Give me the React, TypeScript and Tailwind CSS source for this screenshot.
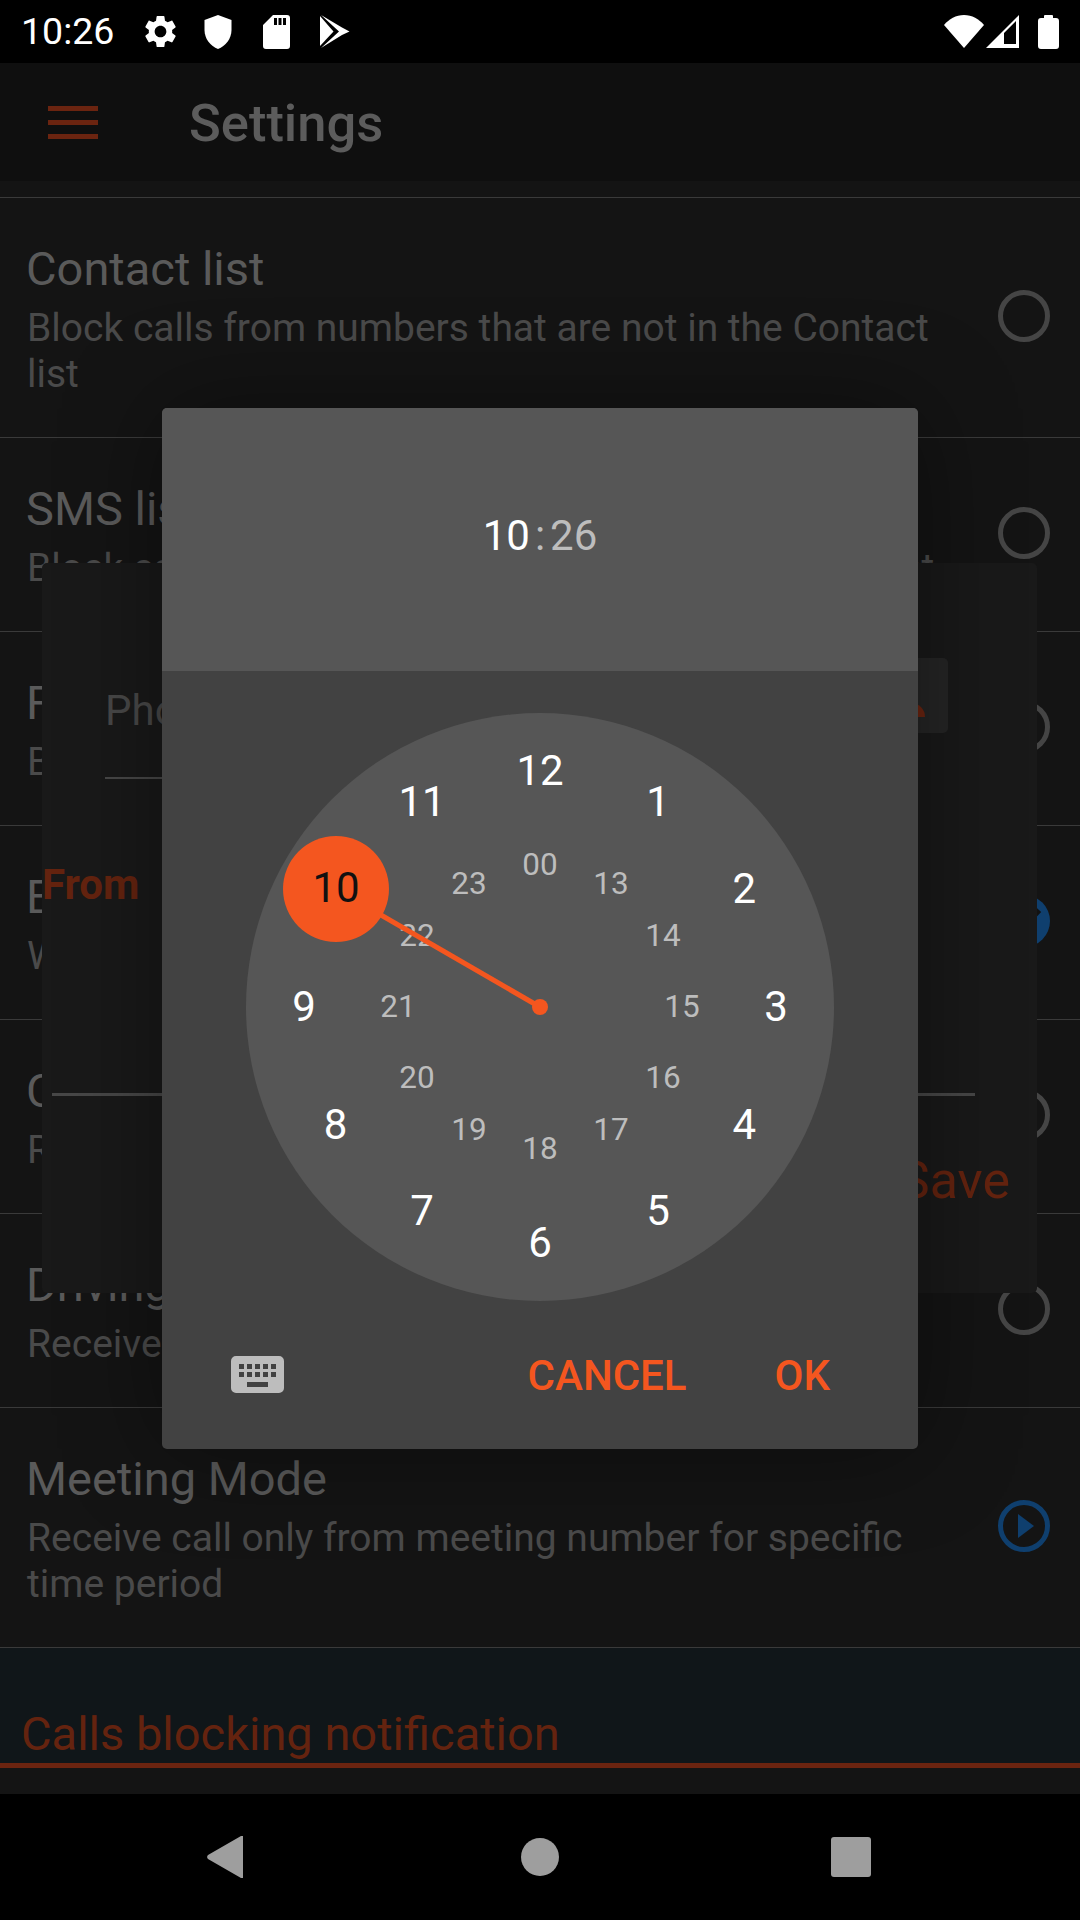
import React from "react";

const outerHours = [12, 1, 2, 3, 4, 5, 6, 7, 8, 9, 10, 11];
const innerHours = ["00", 13, 14, 15, 16, 17, 18, 19, 20, 21, 22, 23];

const rows = [
  { title: "Contact list", sub: ["Block calls from numbers that are not in the Contact", "list"] },
  { title: "SMS list", sub: ["Block calls from numbers that are not in the SMS list"] },
  { title: "Foreign", sub: ["Block foreign numbers"] },
  { title: "Exceptions", sub: ["White list"], state: "checked" },
  { title: "Custom", sub: ["Receive custom"] },
  { title: "Driving Mode", sub: ["Receive call"] },
  { title: "Meeting Mode", sub: ["Receive call only from meeting number for specific", "time period"], state: "play" },
];

const polar = (index: number, radius: number) => {
  const angle = (index * 30 * Math.PI) / 180;
  return { left: 294 + radius * Math.sin(angle), top: 294 - radius * Math.cos(angle) };
};

const StatusBar = () => (
  <div className="flex h-[63px] shrink-0 items-center bg-black pl-[21px] pr-[21px] text-white">
    <span className="w-[120px] text-[37.5px] leading-none">10:26</span>
    <svg className="h-[39px] w-[39px]" viewBox="0 0 24 24" fill="#fff">
      <path d="M19.14 12.94c.04-.3.06-.61.06-.94 0-.32-.02-.64-.07-.94l2.03-1.58c.18-.14.23-.41.12-.61l-1.92-3.32c-.12-.22-.37-.29-.59-.22l-2.39.96c-.5-.38-1.03-.7-1.62-.94l-.36-2.54c-.04-.24-.24-.41-.48-.41h-3.84c-.24 0-.43.17-.47.41l-.36 2.54c-.59.24-1.13.57-1.62.94l-2.39-.96c-.22-.08-.47 0-.59.22L2.74 8.87c-.12.21-.08.47.12.61l2.03 1.58c-.05.3-.09.63-.09.94s.02.64.07.94l-2.03 1.58c-.18.14-.23.41-.12.61l1.92 3.32c.12.22.37.29.59.22l2.39-.96c.5.38 1.03.7 1.62.94l.36 2.54c.05.24.24.41.48.41h3.84c.24 0 .44-.17.47-.41l.36-2.54c.59-.24 1.13-.56 1.62-.94l2.39.96c.22.08.47 0 .59-.22l1.92-3.32c.12-.22.07-.47-.12-.61l-2.01-1.58zM12 15.6c-1.98 0-3.6-1.62-3.6-3.6s1.62-3.6 3.6-3.6 3.6 1.62 3.6 3.6-1.62 3.6-3.6 3.6z" />
    </svg>
    <svg className="ml-[24px] h-[34px] w-[28px]" viewBox="0 0 28 34" fill="#fff">
      <path d="M14 0 L27.5 5 V15 C27.5 24 21.5 31 14 34 C6.5 31 0.5 24 0.5 15 V5 Z" />
    </svg>
    <svg className="ml-[31px] h-[34px] w-[27px]" viewBox="0 0 27 34" fill="#fff">
      <path fillRule="evenodd" d="M10 0 H24 a3 3 0 0 1 3 3 V31 a3 3 0 0 1 -3 3 H3 a3 3 0 0 1 -3 -3 V10 Z M11 3 V10 H14 V3 Z M15.5 3 V10 H18.5 V3 Z M20 3 V10 H23 V3 Z" />
    </svg>
    <svg className="ml-[30px] h-[33px] w-[30px]" viewBox="0 0 30 33" fill="#fff">
      <path d="M0 1 L0 31 L13.5 16.5 Z" />
      <path d="M1 0 L19 16.5 L1 33 L22 20 L29.5 16.5 L22 12.5 Z" />
    </svg>
    <div className="flex-1" />
    <svg className="h-[33px] w-[40px]" viewBox="0 0 40 33" fill="#fff">
      <path d="M0 10 C5 4 12 0 20 0 C28 0 35 4 40 10 L20 33 Z" />
    </svg>
    <svg className="ml-[2px] h-[34px] w-[34px]" viewBox="0 0 34 34" fill="#fff">
      <path fillRule="evenodd" d="M33 0 V33 H0 Z M30 6 L18 18 V29 H30 Z" />
    </svg>
    <svg className="ml-[18px] h-[35px] w-[21px]" viewBox="0 0 21 35" fill="#fff">
      <path d="M6 2 a1 1 0 0 1 1 -1 h7 a1 1 0 0 1 1 1 v2 h3 a3 3 0 0 1 3 3 v25 a3 3 0 0 1 -3 3 h-15 a3 3 0 0 1 -3 -3 v-25 a3 3 0 0 1 3 -3 h3 z" />
    </svg>
  </div>
);

const AppBar = () => (
  <div className="flex h-[118px] shrink-0 items-center bg-[#0f0f0f]">
    <div className="ml-[48px] flex w-[50px] flex-col gap-[9px]">
      <div className="h-[5px] bg-[#6b2410]" />
      <div className="h-[5px] bg-[#6b2410]" />
      <div className="h-[5px] bg-[#6b2410]" />
    </div>
    <span className="ml-[91px] pt-[3px] text-[52.5px] font-medium text-[#5c5c5c]">Settings</span>
  </div>
);

const Radio = ({ state }: { state?: string }) => {
  if (state === "checked") {
    return (
      <svg className="mb-[3px] h-[52px] w-[52px] shrink-0" viewBox="0 0 52 52" fill="none">
        <circle cx="26" cy="26" r="26" fill="#0f3f6e" />
        <path d="M13 26 L22 35 L41 15" stroke="#121212" strokeWidth="6" />
      </svg>
    );
  }
  if (state === "play") {
    return (
      <svg className="mb-[3px] h-[52px] w-[52px] shrink-0" viewBox="0 0 52 52" fill="none">
        <circle cx="26" cy="26" r="23.5" stroke="#0f3f6e" strokeWidth="5" />
        <path d="M20 14 L36 26 L20 38 Z" fill="#0f3f6e" />
      </svg>
    );
  }
  return (
    <svg className="mb-[3px] h-[52px] w-[52px] shrink-0" viewBox="0 0 52 52" fill="none">
      <circle cx="26" cy="26" r="23.5" stroke="#454545" strokeWidth="5" />
    </svg>
  );
};

const SettingRow = ({ title, sub, state }: { title: string; sub: string[]; state?: string }) => (
  <div className="flex items-center border-t border-[#3a3a3a] pl-[27px] pr-[30px]">
    <div className={`flex-1 ${sub.length > 1 ? "h-[239px]" : "h-[193px]"} pt-[44px]`}>
      <div className="mb-[9px] ml-[-1px] text-[47px] leading-[54px] text-[#5a5a5a]">{title}</div>
      <div className="text-[39px] leading-[46px] text-[#4a4a4a]">
        {sub.map((line) => (
          <div key={line}>{line}</div>
        ))}
      </div>
    </div>
    <Radio state={state} />
  </div>
);

const FormDialog = () => (
  <div className="absolute left-[42px] top-[563px] flex h-[730px] w-[995px] flex-col rounded-[5px] bg-[#191919]">
    <div className="flex pl-[63px] pr-[89px] pt-[95px]">
      <div className="h-[121px] flex-1 border-b-[2px] border-[#474747] pt-[21px] text-[42px] text-[#484848]">Phone number</div>
      <div className="ml-[24px] flex h-[75px] w-[200px] justify-end rounded-[5px] bg-[#252525] pr-[23px] pt-[45px]">
        <svg className="h-[14px] w-[28px]" viewBox="0 0 28 14" fill="#6b2410">
          <path d="M0 14 A14 14 0 0 1 28 14 Z" />
        </svg>
      </div>
    </div>
    <div className="mt-[84px] text-[42px] font-bold leading-[44px] text-[#64230f]">From</div>
    <div className="ml-[10px] mr-[62px] mt-[186px] h-[3px] bg-[#474747]" />
    <div className="mt-[58px] pr-[27px] text-right text-[52px] leading-[54px] text-[#64230f]">Save</div>
  </div>
);

const ClockFace = () => (
  <div className="relative mx-auto mt-[42px] h-[588px] w-[588px] rounded-full bg-[#565656]">
    {outerHours.map((hour, i) => (
      <span
        key={hour}
        className="absolute flex h-[60px] w-[80px] -translate-x-1/2 -translate-y-1/2 items-center justify-center pb-[2px] text-[42px] text-white"
        style={polar(i, 236)}
      >
        {hour}
      </span>
    ))}
    {innerHours.map((hour, i) => (
      <span
        key={hour}
        className="absolute flex h-[44px] w-[60px] -translate-x-1/2 -translate-y-1/2 items-center justify-center text-[31.5px] text-[#bdbdbd]"
        style={polar(i, 142)}
      >
        {hour}
      </span>
    ))}
    <svg className="pointer-events-none absolute inset-0" viewBox="0 0 588 588" fill="none">
      <line x1="294" y1="294" x2="90" y2="176" stroke="#f4561f" strokeWidth="5" />
      <circle cx="294" cy="294" r="8" fill="#f4561f" />
    </svg>
    <div className="absolute left-[37px] top-[123px] flex h-[106px] w-[106px] items-center justify-center rounded-full bg-[#f4561f] pb-[3px] text-[42px] text-[#111111]">
      10
    </div>
  </div>
);

const TimePicker = () => (
  <div className="absolute left-[162px] top-[408px] flex h-[1041px] w-[756px] flex-col overflow-hidden rounded-[5px] bg-[#424242] shadow-[0_0_100px_rgba(0,0,0,0.4)]">
    <div className="flex h-[263px] shrink-0 items-center justify-center bg-[#565656] pb-[8px] text-[42px]">
      <span className="text-white">10</span>
      <span className="mx-[5px] text-[#bdbdbd]">:</span>
      <span className="text-[#bdbdbd]">26</span>
    </div>
    <ClockFace />
    <div className="flex flex-1 items-center pl-[69px] pr-[88px] text-[42px] font-medium text-[#f4561f]">
      <svg className="mb-[2px] h-[37px] w-[53px]" viewBox="0 0 53 37" fill="#bdbdbd">
        <path
          fillRule="evenodd"
          d="M5 0 H48 a5 5 0 0 1 5 5 V32 a5 5 0 0 1 -5 5 H5 a5 5 0 0 1 -5 -5 V5 a5 5 0 0 1 5 -5 Z M8 8 V13 H13 V8 Z M16 8 V13 H21 V8 Z M24 8 V13 H29 V8 Z M32 8 V13 H37 V8 Z M40 8 V13 H45 V8 Z M8 16 V21 H13 V16 Z M16 16 V21 H21 V16 Z M24 16 V21 H29 V16 Z M32 16 V21 H37 V16 Z M40 16 V21 H45 V16 Z M16 26 V31 H37 V26 Z"
        />
      </svg>
      <span className="ml-auto">CANCEL</span>
      <span className="ml-[88px]">OK</span>
    </div>
  </div>
);

const NavBar = () => (
  <div className="relative flex h-[126px] shrink-0 items-center bg-black pl-[207px]">
    <svg className="h-[42px] w-[36px]" viewBox="0 0 36 42" fill="#9e9e9e">
      <path d="M36 1 V41 a1 1 0 0 1 -2 1 L1 23 a3 3 0 0 1 0 -4 L34 0 a1 1 0 0 1 2 1 Z" />
    </svg>
    <div className="ml-[278px] h-[38px] w-[38px] rounded-full bg-[#9e9e9e]" />
    <div className="ml-[272px] h-[40px] w-[40px] rounded-[3px] bg-[#9e9e9e]" />
  </div>
);

export default function App() {
  return (
    <div className="relative flex h-[1920px] w-[1080px] flex-col overflow-hidden bg-[#141414] font-['Roboto',sans-serif]">
      <StatusBar />
      <AppBar />
      <div className="flex-1 pt-[16px]">
        {rows.map((row) => (
          <SettingRow key={row.title} {...row} />
        ))}
        <div className="h-[121px] border-t border-[#3a3a3a] bg-[#101619]">
          <div className="flex h-[120px] items-end border-b-[5px] border-[#6b2410] pb-[2px] pl-[21px] text-[47px] leading-[54px] text-[#64230f]">
            Calls blocking notification
          </div>
        </div>
      </div>
      <FormDialog />
      <TimePicker />
      <NavBar />
    </div>
  );
}
